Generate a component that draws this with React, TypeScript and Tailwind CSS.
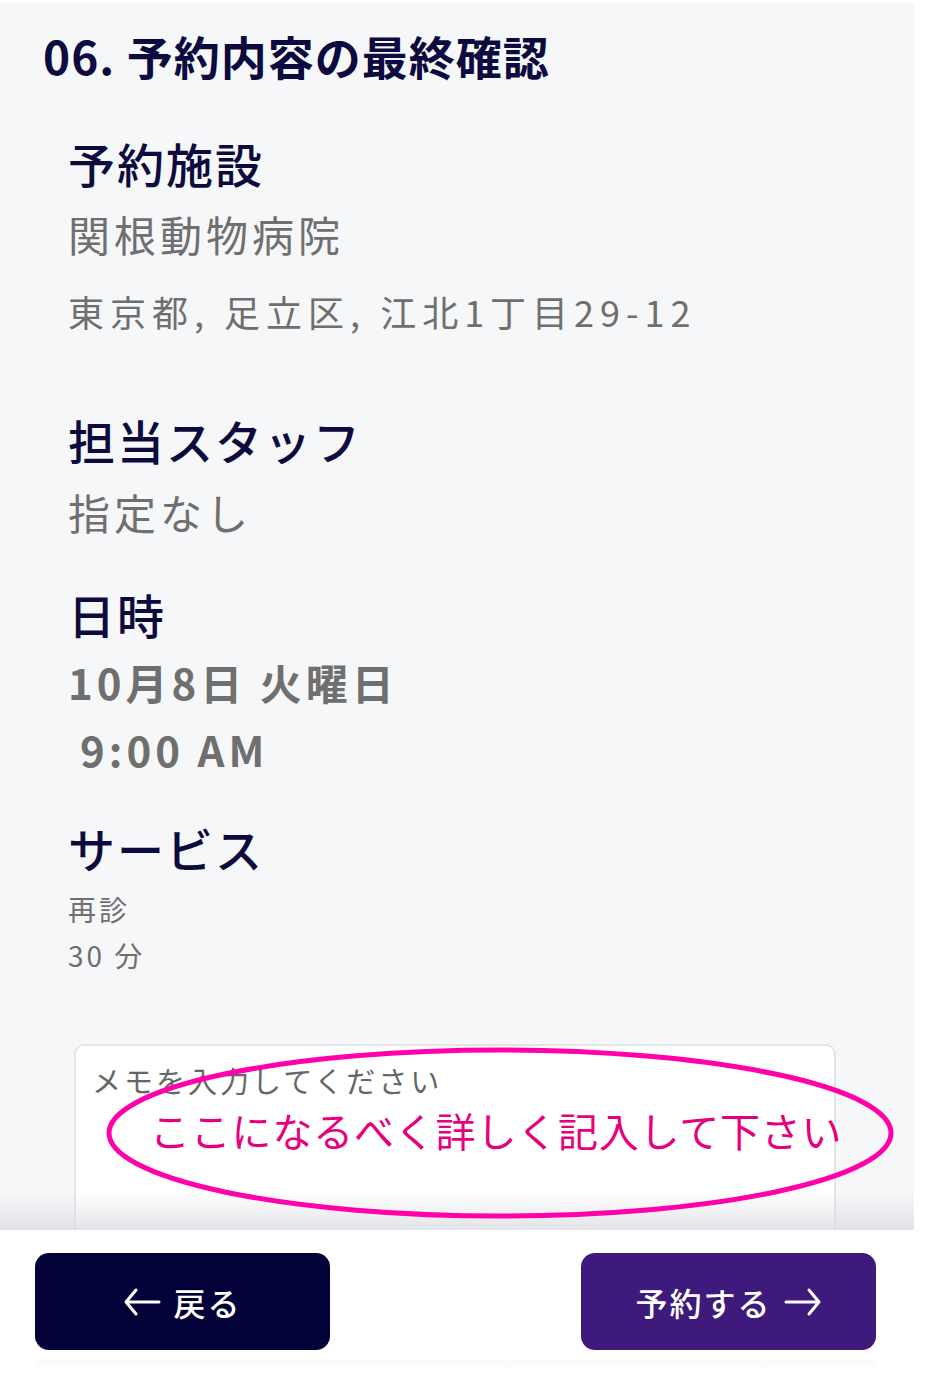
import React from 'react';

const jp = "font-['Noto_Sans_CJK_JP','Noto_Sans',sans-serif]";

function Section({ title, children }: { title: string; children: React.ReactNode }) {
  return (
    <section>
      <h2 className="text-[47px] leading-[60px] font-medium tracking-[2px] text-[#0d0b3e]">{title}</h2>
      {children}
    </section>
  );
}

function ArrowLeft() {
  return (
    <svg width="38" height="30" viewBox="0 0 38 30" fill="none" stroke="white" strokeWidth="3" strokeLinecap="round" strokeLinejoin="round">
      <path d="M36 15H3M13 3L3 15l10 12" />
    </svg>
  );
}

function ArrowRight() {
  return (
    <svg width="38" height="30" viewBox="0 0 38 30" fill="none" stroke="white" strokeWidth="3" strokeLinecap="round" strokeLinejoin="round">
      <path d="M2 15h33M25 3l10 12-10 12" />
    </svg>
  );
}

export default function App() {
  return (
    <div className={`min-h-screen bg-white ${jp}`}>
      <main className="relative w-[914px] h-[1227px] mt-[3px] bg-[#f6f7f9] overflow-hidden">
        <h1 className="pl-[43px] pt-[22px] text-[46px] leading-[60px] font-bold tracking-[1px] text-[#0c0a3e]">
          06. 予約内容の最終確認
        </h1>

        <div className="pl-[68px] mt-[48px]">
          <Section title="予約施設">
            <p className="mt-[13px] text-[42px] leading-[56px] tracking-[4px] text-[#6f6f6f]">関根動物病院</p>
            <p className="mt-[24px] text-[36px] leading-[50px] tracking-[6px] text-[#6f6f6f]">
              東京都, 足立区, 江北1丁目29-12
            </p>
          </Section>

          <div className="mt-[74px]">
            <Section title="担当スタッフ">
              <p className="mt-[14px] text-[42px] leading-[56px] tracking-[4px] text-[#6f6f6f]">指定なし</p>
            </Section>
          </div>

          <div className="mt-[44px]">
            <Section title="日時">
              <p className="mt-[9px] text-[42px] leading-[58px] tracking-[4px] font-bold text-[#6f6f6f]">10月8日 火曜日</p>
              <p className="mt-[9px] pl-[12px] text-[42px] leading-[58px] tracking-[4px] font-bold text-[#6f6f6f]">9:00 AM</p>
            </Section>
          </div>

          <div className="mt-[40px]">
            <Section title="サービス">
              <p className="mt-[10px] text-[28px] leading-[42px] tracking-[3px] text-[#6f6f6f]">再診</p>
              <p className="mt-[4px] text-[28px] leading-[42px] tracking-[3px] text-[#6f6f6f]">30 分</p>
            </Section>
          </div>
        </div>

        <div className="relative ml-[74px] mt-[68px] w-[762px]">
          <textarea
            className="block w-full h-[240px] resize-none rounded-[10px] border-2 border-[#e2e3e6] bg-white px-[16px] pt-[14px] text-[29px] leading-[40px] tracking-[3px] placeholder:text-[#666] outline-none"
            placeholder="メモを入力してください"
          />
          <p className="absolute z-10 left-[76px] top-[58px] text-[40px] leading-[56px] tracking-[0.8px] text-[#e6007e] whitespace-nowrap pointer-events-none">
            ここになるべく詳しく記入して下さい
          </p>
          <svg className="absolute z-10 left-[31px] top-[3px] pointer-events-none" width="790" height="172" viewBox="0 0 790 172">
            <ellipse cx="395" cy="86" rx="391" ry="83" fill="none" stroke="#ff00aa" strokeWidth="5" />
          </svg>
        </div>

        <div className="absolute left-0 right-0 bottom-0 h-[38px] bg-gradient-to-b from-transparent to-[#dcdde2]/80 pointer-events-none" />
      </main>

      <footer className="w-[914px] bg-white pl-[35px] pr-[38px] pt-[23px]">
        <div className="flex justify-between">
          <button className="flex items-center justify-center gap-[12px] w-[295px] h-[97px] rounded-[14px] bg-[#020238] text-white text-[32px] font-medium tracking-[2px]">
            <ArrowLeft />
            <span>戻る</span>
          </button>
          <button className="flex items-center justify-center gap-[12px] w-[295px] h-[97px] rounded-[14px] bg-[#3d1a7b] text-white text-[32px] font-medium tracking-[2px]">
            <span>予約する</span>
            <ArrowRight />
          </button>
        </div>
        <div className="mt-[10px] h-[12px] bg-gradient-to-b from-[#fafafa] to-white" />
      </footer>
    </div>
  );
}
